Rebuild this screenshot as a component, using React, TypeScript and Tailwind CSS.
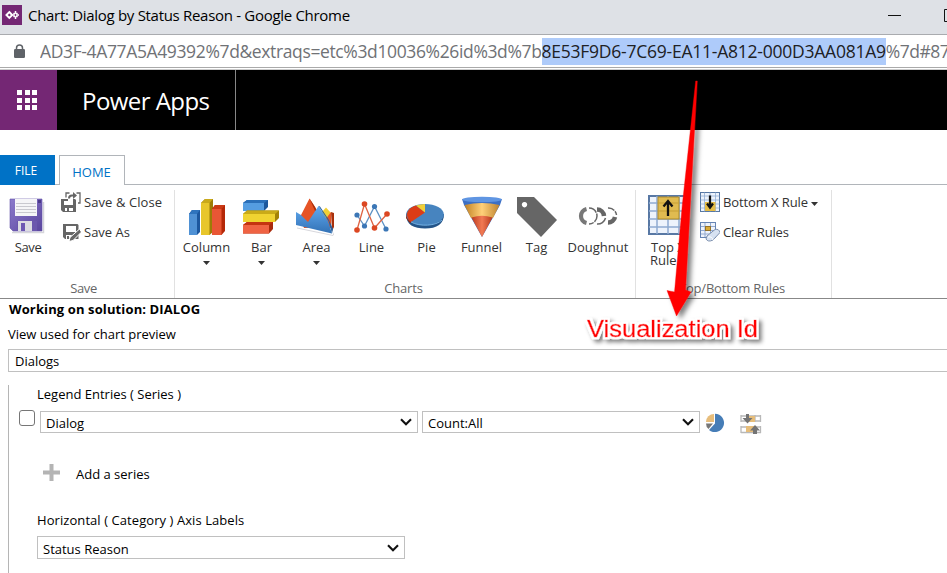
import React from "react";

function PowerLogo() {
  return (
    <svg className="h-5 w-5 shrink-0" viewBox="0 0 20 20">
      <rect width="20" height="20" fill="#742774" />
      <path d="M7.300 7 L10.200 10 L7.300 13 L4.400 10 Z" fill="none" stroke="#fff" strokeWidth="1.900" />
      <path d="M13.500 6 V8.500 M13.500 11.500 V14 M10.500 10 H12.500 M14.500 10 H17 M11.500 8 L13 9.300 M15.500 8 L14 9.300 M11.500 12 L13 10.700 M15.500 12 L14 10.700" fill="none" stroke="#fff" strokeWidth="1.500" />
    </svg>
  );
}

function Lock() {
  return (
    <svg className="h-[15px] w-[11px] shrink-0" viewBox="0 0 11 15">
      <path d="M2.5 6 V4 a3 3 0 0 1 6 0 V6" fill="none" stroke="#5f6368" strokeWidth="1.5" />
      <rect x="0" y="5" width="11" height="9" rx="1.2" fill="#5f6368" />
    </svg>
  );
}

function SaveIcon() {
  return (
    <svg className="h-9 w-9" viewBox="0 0 36 36">
      <defs>
        <linearGradient id="sv" x1="0" y1="0" x2="1" y2="1">
          <stop offset="0" stopColor="#8b7acb" />
          <stop offset="1" stopColor="#5a459e" />
        </linearGradient>
      </defs>
      <path d="M3 34.500 H34.500 V4" fill="none" stroke="#d5d5da" strokeWidth="1.5" />
      <path d="M1 1 H33 V33 H4 L1 30 Z" fill="url(#sv)" stroke="#6351a8" strokeWidth=".6" />
      <rect x="6" y="1" width="22" height="17" fill="#f5f5f7" />
      <path d="M7 5.5 H27 M7 8.5 H27 M7 11.5 H27 M7 14.5 H27" stroke="#c9c9cf" strokeWidth="1" />
      <rect x="8" y="23" width="20" height="10" fill="#6b57ad" />
      <rect x="9" y="23" width="14" height="10" fill="#dcdce2" />
      <rect x="12" y="25" width="4" height="8" fill="#6d58b2" />
      <rect x="29" y="2" width="3" height="3" fill="#4b3a8a" />
    </svg>
  );
}

function SaveCloseIcon() {
  return (
    <svg className="h-5 w-5" viewBox="0 0 20 20" fill="none" stroke="#666">
      <path d="M5 5.5 V1 H8.5 M15.5 1 H19 V11 H17" strokeWidth="1.3" />
      <path d="M8 6.5 C8 4.5 9 3.5 11 3.5 H14" strokeWidth="2" />
      <path d="M12 0 L16 3.5 L12 7 Z" fill="#666" stroke="none" />
      <path d="M1 7 H7 V9 H12 V7 H14 L15 8 V20 H2 L0 18 V7 Z" fill="#666" stroke="none" />
      <rect x="3" y="9" width="9" height="4" fill="#fff" stroke="none" />
      <path d="M4 19 V16 H6 V19 M8 19 V16 H12 V19 Z" fill="#fff" stroke="none" />
    </svg>
  );
}

function SaveAsIcon() {
  return (
    <svg className="h-5 w-5" viewBox="0 0 20 20">
      <path d="M2 2 H16.500 L17.500 3 V17 H4 L2 15 Z" fill="#666" />
      <rect x="5" y="4" width="10" height="6" fill="#fff" />
      <path d="M5 13 H11 L8.5 18 H5 Z" fill="#fff" />
      <rect x="6" y="14" width="2" height="3" fill="#666" />
      <path d="M18.500 7 L20.500 10 L12 18.500 L8 19.500 L9 15.500 Z" fill="#666" stroke="#fff" strokeWidth="1" />
    </svg>
  );
}

function ColumnIcon() {
  return (
    <svg className="h-[38px] w-[38px]" viewBox="0 0 38 38">
      <path d="M1 16 L4 12 H12 V34 L9 37 H1Z" fill="#1c579e" />
      <path d="M1 16 L4 12 H12 L9 16Z" fill="#2f74bd" />
      <path d="M1 16 H9 V37 H1Z" fill="#4f91d4" />
      <path d="M13 5 L17 1 H25 V34 L21.500 37 H13Z" fill="#9c7c06" />
      <path d="M13 5 L17 1 H25 L21.500 5Z" fill="#c9a91a" />
      <path d="M13 5 H21.500 V37 H13Z" fill="#e8c62b" />
      <path d="M24 11 L27 7 H37 V33 L33.500 37 H24Z" fill="#b52808" />
      <path d="M24 11 L27 7 H37 L33.500 11Z" fill="#cb3a16" />
      <path d="M24 11 H33.500 V37 H24Z" fill="#e95635" />
    </svg>
  );
}

function BarIcon() {
  return (
    <svg className="h-[38px] w-[38px]" viewBox="0 0 38 38">
      <path d="M0 5 L4 2 H25 V9 L21 13 H0Z" fill="#1d589c" />
      <path d="M0 5 L4 2 H25 L21 5Z" fill="#2b70b9" />
      <path d="M0 5 H21 V13 H0Z" fill="#559de1" />
      <path d="M0 16 L4 12.500 H36 V20 L32 24 H0Z" fill="#a48307" />
      <path d="M0 16 L4 12.500 H36 L32 16Z" fill="#c9aa18" />
      <path d="M0 16 H32 V24 H0Z" fill="#f0d331" />
      <path d="M0 27 L4 24 H30 V31 L26 35.500 H0Z" fill="#a92b0d" />
      <path d="M0 27 L4 24 H30 L26 27Z" fill="#c43411" />
      <path d="M0 27 H26 V35.500 H0Z" fill="#ef6343" />
    </svg>
  );
}

function AreaIcon() {
  return (
    <svg className="mr-[3px] h-[38px] w-[38px]" viewBox="0 0 38 38">
      <defs>
        <linearGradient id="ar" x1="0" y1="0" x2="0" y2="1">
          <stop stopColor="#61aaf0" />
          <stop offset="1" stopColor="#3271b5" />
        </linearGradient>
      </defs>
      <path d="M1 30 L37 37.500 L38.500 34" fill="none" stroke="#d7d7dc" />
      <path d="M25 15 L30 9.500 L35 15 V28 H26Z" fill="#f1cf37" />
      <path d="M4 19 L13.500 0.500 L19 9 L25 20 L29 22 L35 14 V30 H8Z" fill="#e65426" />
      <path d="M13.500 0.500 L19 9 L21 13 L19 13Z M35 14 L38 15 V29 L36 33Z" fill="#a9300b" />
      <path d="M0 14 L5 17 L12 24 L22.500 8 L32 23 L36 35.500 L0 27Z" fill="url(#ar)" />
      <path d="M22.500 8 L32.500 23 L36 35.500 L37 31 L33 22 L24 8.500Z" fill="#28619e" />
    </svg>
  );
}

function LineIcon() {
  return (
    <svg className="h-[38px] w-[38px]" viewBox="0 0 38 38" strokeWidth="1.300">
      <path d="M4 17 L11.500 28 L21.500 8.500 L33 31" fill="none" stroke="#5c91c4" />
      <path d="M4 32 L11.500 6 L21.500 30 L34 16" fill="none" stroke="#df6342" />
      <g fill="#3c77b6">
        <circle cx="4" cy="17" r="2.600" />
        <circle cx="11.500" cy="28" r="2.600" />
        <circle cx="21.500" cy="8.500" r="2.600" />
        <circle cx="33" cy="31" r="2.600" />
      </g>
      <g fill="#dc4722">
        <circle cx="4" cy="32" r="2.800" />
        <circle cx="11.500" cy="6" r="2.800" />
        <circle cx="21.500" cy="30" r="2.800" />
        <circle cx="34" cy="16" r="2.800" />
      </g>
    </svg>
  );
}

function PieIcon() {
  return (
    <svg className="mr-[3px] mb-[3px] h-[38px] w-[38px]" viewBox="0 0 38 38">
      <path d="M0 17 C0 28 8 31.500 19 31.500 C31 31.500 38 27 38 17Z" fill="#245488" />
      <path d="M0 16 V21 L4 26 L7 24Z" fill="#a62605" />
      <ellipse cx="19" cy="17.500" rx="18.800" ry="10.500" fill="#4784bf" />
      <path d="M19 15.500 L5 25 C-1 20 -1 12 10 8.500Z" fill="#dc3c16" />
      <path d="M19 15.500 L10 8.500 C13 7.500 16 7 19 7Z" fill="#f2d038" />
      <path d="M5 25 C14 30 30 29 36 23" fill="none" stroke="#76b3e5" />
    </svg>
  );
}

function FunnelIcon() {
  return (
    <svg className="h-[42px] w-[42px]" viewBox="0 0 42 42">
      <defs>
        <linearGradient id="fu"><stop stopColor="#c18124" /><stop offset=".5" stopColor="#ffd079" /><stop offset="1" stopColor="#be832e" /></linearGradient>
        <linearGradient id="fr"><stop stopColor="#bb3a1d" /><stop offset=".5" stopColor="#f17a54" /><stop offset="1" stopColor="#b7391c" /></linearGradient>
      </defs>
      <path d="M1 3 H41 L39 9 L21 41 L3 9Z" fill="#3c6fc4" />
      <ellipse cx="21" cy="3.500" rx="20" ry="2.800" fill="#5f95e2" />
      <path d="M3.500 9 Q21 5 38.500 9 L32 22 H10Z" fill="url(#fu)" />
      <path d="M10.500 21.500 Q21 18 31.500 21.500 L21 41Z" fill="url(#fr)" />
    </svg>
  );
}

function TagIcon() {
  return (
    <svg className="h-[42px] w-[42px]" viewBox="0 0 42 42">
      <path fillRule="evenodd" d="M1 1 H18 L41 24 L25 41 L1 17Z M8.500 6 a2.700 2.700 0 1 0 .01 0Z" fill="#666" />
    </svg>
  );
}

function DoughnutIcon() {
  return (
    <svg className="mr-px mb-[2px] h-[22px] w-[42px]" viewBox="0 0 42 22" fill="none" stroke="#666">
      <path d="M9.500 4 A7.200 7.200 0 0 0 9.500 18" strokeWidth="4.200" stroke="#777" />
      <path d="M12 3 A8 8 0 0 1 12 19" strokeWidth="1.500" strokeDasharray="9 1" />
      <path d="M20 4.500 A7 7 0 0 1 27 11" strokeWidth="4.500" />
      <path d="M28.500 13 A8 8 0 0 1 20 19" strokeWidth="1.500" />
      <path d="M31 3 A8 8 0 0 1 39.500 10" strokeWidth="1.500" strokeDasharray="7 1" />
      <path d="M38 12 A7 7 0 0 1 31 17.500" strokeWidth="4.500" />
    </svg>
  );
}

function RuleIcon({ up, small }: { up?: boolean; small?: boolean }) {
  return (
    <svg className={small ? "h-5 w-5" : "h-10 w-10"} viewBox="0 0 40 40">
      <rect x="1" y="1" width="38" height="38" fill="#edf3fc" stroke="#5878a4" strokeWidth="2" />
      <path d="M9 1 V39 M20 1 V39 M31 1 V39 M1 8 H39 M1 16 H39 M1 24 H39 M1 32 H39" stroke="#8eabd1" strokeWidth="1.500" />
      {up ? (
        <>
          <rect x="10" y="2" width="21" height="22" fill="#e0bb50" stroke="#ad8a2a" />
          <path d="M10 8 H31 M10 16 H31" stroke="#c79f35" />
          <path d="M20 21 V7 M15.500 11.500 L20 6 L24.500 11.500" stroke="#111" strokeWidth="2.300" fill="none" />
        </>
      ) : (
        <>
          <rect x="10" y="20" width="21" height="18" fill="#e5bc46" />
          <path d="M20 7 V28 M14 23 L20 31 L26 23" stroke="#111" strokeWidth="4.500" fill="none" />
        </>
      )}
    </svg>
  );
}

function ClearIcon() {
  return (
    <svg className="h-5 w-5" viewBox="0 0 20 20">
      <rect x=".5" y=".5" width="15" height="15" fill="#eef3fb" stroke="#6684b3" />
      <path d="M1 4.500 H15 M1 8.500 H15 M1 12 H15 M5 1 V15 M10.500 1 V15" stroke="#93aad0" />
      <rect x="5.500" y="4.500" width="5" height="4" fill="#dbab36" stroke="#967328" />
      <path d="M7 14 L15 7.500 Q19 6.500 20 10.500 L13 18 Q8 20.500 6 17Z" fill="#d7e2f2" stroke="#7d90ae" />
      <path d="M8 15 Q12 14 13 18" fill="none" stroke="#fff" />
    </svg>
  );
}

function ToolButton({ label, width, children, drop }: { label: string; width: string; children: React.ReactNode; drop?: boolean }) {
  return (
    <div className={`flex flex-col items-center ${width}`}>
      <div className="flex h-[42px] items-center justify-center">{children}</div>
      <span className="text-[13px] leading-[18px] whitespace-nowrap">{label}</span>
      {drop && <Caret className="mt-[5px]" />}
    </div>
  );
}

function Caret({ className = "" }: { className?: string }) {
  return (
    <svg className={`h-1 w-[7px] shrink-0 ${className}`} viewBox="0 0 7 4">
      <path d="M0 0 H7 L3.500 4Z" fill="#333" />
    </svg>
  );
}

function SelectBox({ value, size }: { value: string; size: string }) {
  return (
    <div className={`flex items-center justify-between border border-[#c0c0c0] bg-white pr-[5px] pl-[5px] ${size}`}>
      <span className="pt-[2px]">{value}</span>
      <svg className="h-[8px] w-[12px]" viewBox="0 0 12 8">
        <path d="M1 1.300 L6 6.300 L11 1.300" fill="none" stroke="#111" strokeWidth="2.100" />
      </svg>
    </div>
  );
}

function Ribbon() {
  return (
    <div className="flex h-[114px] border-b border-[#888] pt-[5px] text-[#333]">
      <section className="flex w-[175px] flex-col border-r border-[#e1e1e1]">
        <div className="flex h-[88px]">
          <div className="flex w-14 flex-col items-center pt-[8px] pr-[2px]">
            <SaveIcon />
            <span className="mt-[4px] pl-[2px] text-[13px] leading-[18px] tracking-[-0.35px]">Save</span>
          </div>
          <div className="flex flex-col gap-[10px] pt-[2px] pl-[5px]">
            <div className="flex h-5 items-center gap-[3px]"><SaveCloseIcon /><span className="text-[13px] tracking-[0.08px]">Save &amp; Close</span></div>
            <div className="flex h-5 items-center gap-[3px]"><SaveAsIcon /><span className="text-[13px]">Save As</span></div>
          </div>
        </div>
        <span className="pr-[7px] text-center text-[13px] leading-[20px] tracking-[-0.35px] text-[#666]">Save</span>
      </section>
      <section className="flex w-[461px] flex-col border-r border-[#e1e1e1]">
        <div className="flex h-[88px] pt-[6px] pl-[4px]">
          <ToolButton label="Column" width="w-[55px]" drop><ColumnIcon /></ToolButton>
          <ToolButton label="Bar" width="w-[55px]" drop><BarIcon /></ToolButton>
          <ToolButton label="Area" width="w-[55px]" drop><AreaIcon /></ToolButton>
          <ToolButton label="Line" width="w-[55px]"><LineIcon /></ToolButton>
          <ToolButton label="Pie" width="w-[55px]"><PieIcon /></ToolButton>
          <ToolButton label="Funnel" width="w-[55px]"><FunnelIcon /></ToolButton>
          <ToolButton label="Tag" width="w-[55px]"><TagIcon /></ToolButton>
          <ToolButton label="Doughnut" width="w-[68px]"><DoughnutIcon /></ToolButton>
        </div>
        <span className="pr-[3px] text-center text-[13px] leading-[20px] tracking-[-0.2px] text-[#666]">Charts</span>
      </section>
      <section className="flex w-[196px] flex-col border-r border-[#e1e1e1]">
        <div className="flex h-[88px]">
          <div className="flex w-[60px] flex-col items-start pt-[5px] pl-[12px]">
            <RuleIcon up />
            <span className="mt-[6px] ml-[3px] text-[13px] leading-[13px] whitespace-nowrap">Top X</span>
            <span className="ml-[2px] text-[13px] leading-[13px] whitespace-nowrap">Rule</span>
          </div>
          <div className="flex flex-col gap-[10px] pt-[2px] pl-1">
            <div className="flex h-5 items-center gap-[3px]"><RuleIcon small /><span className="text-[13px] tracking-[-0.1px] whitespace-nowrap">Bottom X Rule</span><Caret className="mt-1" /></div>
            <div className="flex h-5 items-center gap-[3px]"><ClearIcon /><span className="text-[13px] tracking-[-0.15px]">Clear Rules</span></div>
          </div>
        </div>
        <span className="pr-[3px] text-center text-[13px] leading-[20px] tracking-[-0.2px] text-[#666]">Top/Bottom Rules</span>
      </section>
    </div>
  );
}

function Annotation() {
  return (
    <svg className="pointer-events-none absolute top-[70px] left-[570px] h-[290px] w-[210px]" viewBox="570 70 210 290">
      <defs>
        <filter id="shadow" x="-50%" y="-20%" width="220%" height="150%">
          <feDropShadow dx="4" dy="3" stdDeviation="2.5" floodColor="#000" floodOpacity=".5" />
        </filter>
        <filter id="outline" x="-10%" y="-40%" width="120%" height="200%">
          <feMorphology in="SourceAlpha" operator="dilate" radius="1.5" result="wide" />
          <feFlood floodColor="#fff" />
          <feComposite in2="wide" operator="in" result="halo" />
          <feGaussianBlur in="wide" stdDeviation="2" />
          <feOffset dx="3" dy="3" />
          <feComponentTransfer result="shade"><feFuncA type="linear" slope=".5" /></feComponentTransfer>
          <feMerge>
            <feMergeNode in="shade" />
            <feMergeNode in="halo" />
            <feMergeNode in="SourceGraphic" />
          </feMerge>
        </filter>
      </defs>
      <path d="M695.700 81 L697.300 81 L690.300 205 L685.500 290 L691 292 L676.500 316 L667 290.500 L674.500 292 L682.300 205Z" fill="#f00" stroke="#f00" strokeWidth=".4" filter="url(#shadow)" />
      <text x="587" y="337" textLength="171" lengthAdjust="spacingAndGlyphs" fontFamily="Liberation Sans, Arial, sans-serif" fontSize="24.500" fill="#f00" stroke="#f00" strokeWidth=".5" filter="url(#outline)">Visualization Id</text>
    </svg>
  );
}

export default function App() {
  return (
    <div className="relative h-[573px] w-[947px] overflow-hidden bg-white font-['Open_Sans','Noto_Sans',sans-serif] text-[13px] leading-[18px] text-black">
      <header className="flex h-[35px] items-center border-b border-[#a9abaf] bg-[#dee1e6] pb-[4px] pl-[2px]">
        <PowerLogo />
        <span className="ml-[6px] text-[15px] tracking-[-0.3px] whitespace-nowrap">Chart: Dialog by Status Reason - Google Chrome</span>
        <svg className="ml-auto h-[14px] w-[59px]" viewBox="0 0 59 14" fill="none" stroke="#111">
          <path d="M0 7.500 H13 M59 1.500 H56.500 V13.500 H59" />
        </svg>
      </header>
      <div className="flex h-[33px] items-center border-b border-[#aaa] pl-[14px]">
        <Lock />
        <div className="ml-[15px] flex items-center overflow-hidden text-[17.5px] leading-[27px] whitespace-nowrap text-[#707276]">
          <span className="tracking-[-0.37px]">AD3F-4A77A5A49392%7d&amp;extraqs=etc%3d10036%26id%3d%7b</span>
          <span className="bg-[#aecbfa] tracking-[-0.24px] text-[#202124]">8E53F9D6-7C69-EA11-A812-000D3AA081A9</span>
          <span className="tracking-[-0.5px]">%7d#87</span>
        </div>
      </div>
      <div className="mt-px h-px bg-[#ccc]" />
      <nav className="flex h-[60px] bg-black text-white">
        <div className="flex w-[57px] items-center justify-center bg-[#742774] pr-[3px]">
          <div className="grid grid-cols-3 gap-[2.5px]">
            {Array.from({ length: 9 }, (_, i) => <i key={i} className="h-[5px] w-[5px] bg-white" />)}
          </div>
        </div>
        <div className="flex w-[179px] items-center border-r border-[#888] pt-[2px] pl-[25px] text-[24px] tracking-[-0.55px]">Power Apps</div>
      </nav>
      <div className="mt-[25px] flex h-[30px]">
        <div className="flex w-[55px] items-center justify-center bg-[#0072c6] pt-px pr-[3px] text-[12px] text-white">FILE</div>
        <div className="w-1 border-b border-[#b1b5ba]" />
        <div className="flex w-[66px] items-center justify-center border border-b-0 border-[#b1b5ba] pt-[2px] pr-px text-[13px] text-[#0072c6]">HOME</div>
        <div className="flex-1 border-b border-[#b1b5ba]" />
      </div>
      <Ribbon />
      <main>
        <div className="mt-px ml-[9px] text-[13px] font-bold tracking-[0.12px]">Working on solution: DIALOG</div>
        <div className="mt-[7px] ml-2">View used for chart preview</div>
        <div className="mt-[6px] ml-2 flex h-[23px] items-center border border-r-0 border-[#c0c0c0] pl-[6px]">Dialogs</div>
        <div className="mt-[15px] ml-2 h-[190px] border-l border-[#b5b5b5] pl-[10px]">
          <div className="-mt-[2px] ml-[18px]">Legend Entries ( Series )</div>
          <div className="mt-[8px] flex">
            <i className="-mt-px h-4 w-4 rounded-[3px] border border-[#767676] bg-white" />
            <SelectBox value="Dialog" size="ml-[5px] h-[22px] w-[378px]" />
            <SelectBox value="Count:All" size="ml-1 h-[22px] w-[278px]" />
            <svg className="mt-[2px] ml-[5px] h-5 w-5" viewBox="0 0 20 20">
              <path d="M9 1 V9 H1 A8 8 0 0 1 9 1Z" fill="#e7bd7b" />
              <path d="M1 10.500 H8 L3.500 16 Q1 14 1 10.500Z" fill="#777" />
              <path d="M10 .7 A9.200 9.200 0 1 1 4 17 L10 10.500Z" fill="#467db7" />
            </svg>
            <svg className="mt-[3px] ml-[15px] h-[21px] w-[22px]" viewBox="0 0 22 21">
              <path d="M1 1 V8 M7 1 V8 M15 1 V8 M20.500 1 V8 M1 2 H21 M1 7 H21 M1 12 V19 M7 12 V19 M15 12 V19 M20.500 12 V19 M1 13 H21 M1 18.500 H21" stroke="#b8b8b8" fill="none" strokeWidth="1.300" />
              <rect x="8" y="2" width="7" height="6" fill="#e6bd7a" /><rect x="6" y="12" width="8" height="6" fill="#e6bd7a" />
              <path d="M6 0 H9 V4 H12.500 L7.500 9.500 L2.500 4 H6Z M15 11 L20 16.500 H17 V20 H13 V16.500 H10Z" fill="#747474" />
            </svg>
          </div>
          <div className="mt-[27px] flex h-[20px] items-center">
            <svg className="ml-[24px] h-[17px] w-[17px]" viewBox="0 0 17 17"><path d="M8.500 0 V17 M0 8.500 H17" stroke="#b4b4b4" strokeWidth="4" /></svg>
            <span className="mt-1 ml-[16px]">Add a series</span>
          </div>
          <div className="mt-[29px] ml-[18px] tracking-[0.07px]">Horizontal ( Category ) Axis Labels</div>
          <SelectBox value="Status Reason" size="mt-[7px] ml-[18px] h-[23px] w-[368px]" />
        </div>
      </main>
      <Annotation />
    </div>
  );
}
